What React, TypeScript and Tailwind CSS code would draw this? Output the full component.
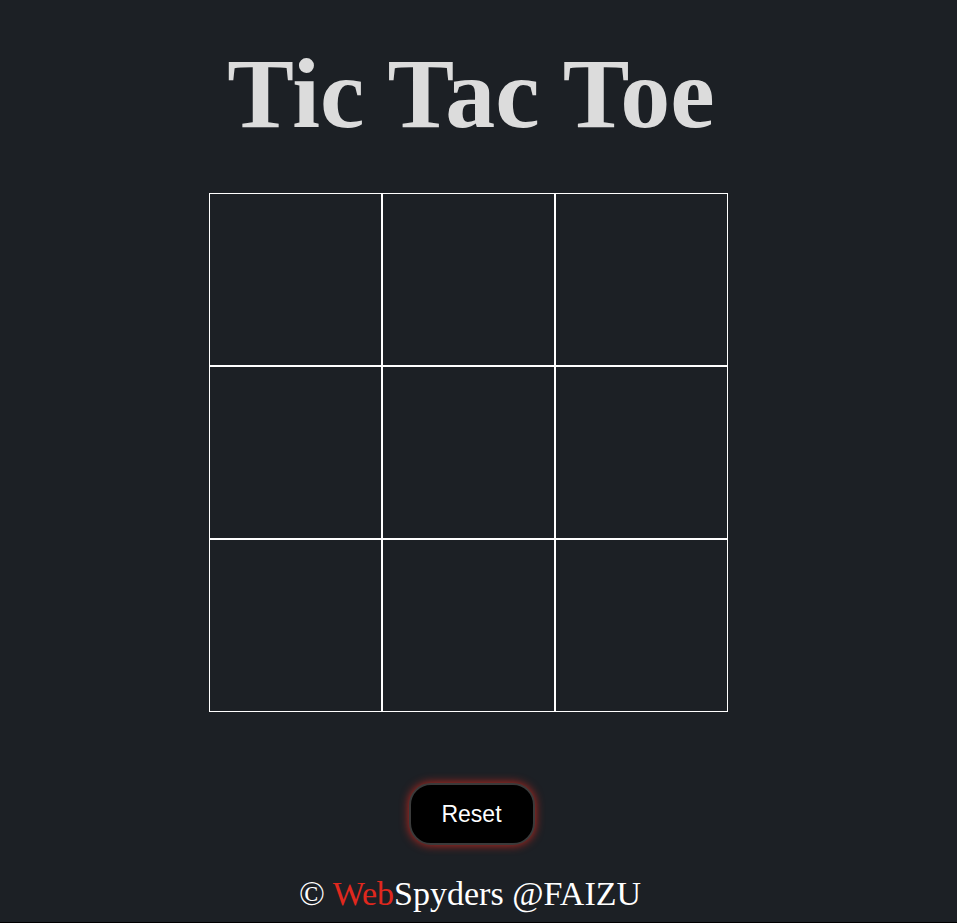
import React from "react";

const App = () => {
  const [board, setBoard] = React.useState<string[]>(Array(9).fill(""));
  const [turn, setTurn] = React.useState("X");

  const play = (i: number) => {
    if (board[i]) return;
    const next = [...board];
    next[i] = turn;
    setBoard(next);
    setTurn(turn === "X" ? "O" : "X");
  };

  return (
    <div className="min-h-[923px] w-full bg-[#1c2025] border-b border-black">
      <div className="w-[937px] flex flex-col items-center">
        <h1 className="mt-[33px] ml-[5px] font-['Liberation_Serif',serif] font-bold text-[100px] leading-[122px] text-[#dcdcdc]">
          Tic Tac Toe
        </h1>

        <div className="mt-[38px] grid grid-cols-3 w-[519px]">
          {board.map((val, i) => (
            <div
              key={i}
              onClick={() => play(i)}
              className="h-[173px] border border-white flex items-center justify-center text-white text-7xl font-['Liberation_Sans',sans-serif] cursor-pointer"
            >
              {val}
            </div>
          ))}
        </div>

        <button
          onClick={() => {
            setBoard(Array(9).fill(""));
            setTurn("X");
          }}
          className="mt-[71px] ml-[6px] w-[126px] h-[62px] rounded-[22px] bg-black border-2 border-[#3a3a3a] shadow-[0_0_10px_#c8281e] text-white text-[23px] font-['Liberation_Sans',sans-serif]"
        >
          Reset
        </button>

        <p className="mt-[28px] ml-[3px] font-['Liberation_Serif',serif] text-[34px] leading-[42px] text-white">
          © <span className="text-[#e0281e]">Web</span>Spyders @FAIZU
        </p>
      </div>
    </div>
  );
};

export default App;
